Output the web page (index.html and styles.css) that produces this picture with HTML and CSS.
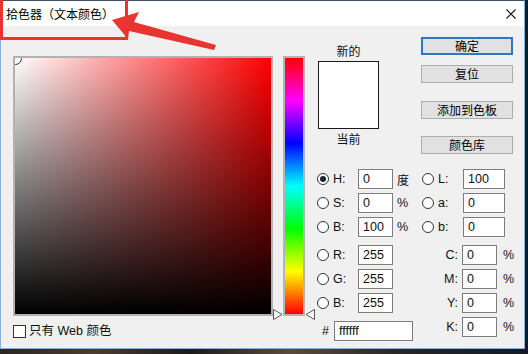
FILE: index.html
```html
<!DOCTYPE html>
<html>
<head>
<meta charset="utf-8">
<link rel="stylesheet" href="styles.css">
</head>
<body>
<div class="window">
  <div class="titlebar">
    <span class="title">拾色器（文本颜色）</span>
    <svg class="close" width="10" height="10" viewBox="0 0 10 10"><path d="M0.5 0.5L9.5 9.5M9.5 0.5L0.5 9.5" stroke="#111" stroke-width="1.1" fill="none"/></svg>
  </div>
  <div class="body">
    <div class="left">
      <div class="field"><span class="ring"></span></div>
      <div class="webonly"><span class="checkbox"></span><span class="cjk mixed">只有 Web 颜色</span></div>
    </div>
    <div class="hue-col">
      <div class="hue"></div>
      <svg class="tri tri-l" width="10" height="11" viewBox="0 0 10 11"><path d="M0.5 0.5L9 5.5L0.5 10.5Z" fill="#fff" stroke="#555" stroke-width="1"/></svg>
      <svg class="tri tri-r" width="10" height="11" viewBox="0 0 10 11"><path d="M9.5 0.5L1 5.5L9.5 10.5Z" fill="#fff" stroke="#555" stroke-width="1"/></svg>
    </div>
    <div class="panel">
      <div class="top">
        <div class="swatch-col">
          <div class="cap cap-new cjk">新的</div>
          <div class="swatch"></div>
          <div class="cap cap-cur cjk">当前</div>
        </div>
        <div class="buttons">
          <div class="btn btn-default cjk">确定</div>
          <div class="btn btn-reset cjk">复位</div>
          <div class="btn btn-add cjk">添加到色板</div>
          <div class="btn btn-lib cjk">颜色库</div>
        </div>
      </div>
      <div class="fields">
        <div class="col">
          <div class="row"><span class="radio on"></span><span class="lbl">H:</span><span class="inp">0</span><span class="unit cjk">度</span></div>
          <div class="row"><span class="radio"></span><span class="lbl">S:</span><span class="inp">0</span><span class="unit">%</span></div>
          <div class="row"><span class="radio"></span><span class="lbl">B:</span><span class="inp">100</span><span class="unit">%</span></div>
          <div class="row group"><span class="radio"></span><span class="lbl">R:</span><span class="inp">255</span></div>
          <div class="row"><span class="radio"></span><span class="lbl">G:</span><span class="inp">255</span></div>
          <div class="row"><span class="radio"></span><span class="lbl">B:</span><span class="inp">255</span></div>
          <div class="row hexrow"><span class="hash">#</span><span class="inp hex">ffffff</span></div>
        </div>
        <div class="col">
          <div class="row"><span class="radio"></span><span class="lbl">L:</span><span class="inp wide">100</span></div>
          <div class="row"><span class="radio"></span><span class="lbl">a:</span><span class="inp wide">0</span></div>
          <div class="row"><span class="radio"></span><span class="lbl">b:</span><span class="inp wide">0</span></div>
          <div class="row group"><span class="clbl">C:</span><span class="inp">0</span><span class="pct">%</span></div>
          <div class="row"><span class="clbl">M:</span><span class="inp">0</span><span class="pct">%</span></div>
          <div class="row"><span class="clbl">Y:</span><span class="inp">0</span><span class="pct">%</span></div>
          <div class="row"><span class="clbl">K:</span><span class="inp">0</span><span class="pct">%</span></div>
        </div>
      </div>
    </div>
  </div>
</div>
<svg class="annot" width="528" height="354" viewBox="0 0 528 354">
  <rect x="1.5" y="-3" width="125" height="41.5" fill="none" stroke="#e8352f" stroke-width="3"/>
  <path d="M112 20 L139 12 L134 22 L216 45 L214 50 L129 31 L128 39 Z" fill="#e8352f"/>
</svg>
</body>
</html>
```
FILE: styles.css
```css
* { box-sizing: border-box; }
html, body { margin: 0; padding: 0; }
body {
  width: 528px;
  height: 354px;
  overflow: hidden;
  position: relative;
  background: linear-gradient(90deg, #2b2522 0%, #4b3b31 18%, #1d1a1a 36%, #5a4a3f 55%, #2a2525 75%, #1a1e26 92%, #141a24 100%);
  font-family: "Liberation Sans", "Noto Sans CJK SC", sans-serif;
  font-size: 12.5px;
  color: #111;
}
.cjk { font-family: "Noto Sans CJK SC", "Liberation Sans", sans-serif; font-size: 12px; }
.cjk.mixed { font-family: "Liberation Sans", "Noto Sans CJK SC", sans-serif; font-size: 12.5px; }
.window {
  width: 525px;
  height: 349px;
  border: 1px solid #86b0dc;
  border-top-color: #3d4f66;
  background: #f0f0f0;
  display: flex;
  flex-direction: column;
}
.titlebar {
  height: 25px;
  flex: none;
  background: #fff;
  display: flex;
  align-items: center;
  padding-left: 5px;
}
.title { font-family: "Noto Sans CJK SC", sans-serif; font-size: 12px; color: #000; line-height: 14px; }
.close { margin-left: auto; margin-right: 8px; }
.body {
  flex: 1;
  display: flex;
  align-items: flex-start;
  padding: 11px 0 0 12px;
}
.left { width: 260px; margin-top: 19px; }
.field {
  width: 260px;
  height: 260px;
  border: 2px solid #b2b2b2;
  position: relative;
  overflow: hidden;
  background: linear-gradient(to bottom, rgba(0,0,0,0), #000), linear-gradient(to right, #fff, #f00);
}
.ring {
  position: absolute;
  left: -6px;
  top: -6px;
  width: 13px;
  height: 13px;
  border-radius: 50%;
  border: 1.5px solid #333;
}
.webonly { display: flex; align-items: center; margin-top: 9px; height: 13px; gap: 3px; }
.webonly .cjk { line-height: 13px; color: #111; }
.checkbox { width: 13px; height: 13px; border: 1px solid #333; background: #fff; flex: none; }
.hue-col { width: 41px; height: 260px; margin-top: 19px; position: relative; flex: none; }
.hue {
  margin-left: 10px;
  width: 22px;
  height: 260px;
  border: 2px solid #b4b4b4;
  background: linear-gradient(to bottom, #f00 0%, #f0f 16.67%, #00f 33.33%, #0ff 50%, #0f0 66.67%, #ff0 83.33%, #f00 100%);
}
.tri { position: absolute; top: 253px; }
.tri-l { left: 0; }
.tri-r { left: 32px; }
.panel { width: 210px; padding-left: 3px; flex: none; }
.top { display: flex; align-items: flex-start; }
.swatch-col { width: 61px; margin-left: 1px; display: flex; flex-direction: column; align-items: center; }
.cap { line-height: 14px; height: 14px; color: #111; }
.cap-new { margin-top: 7px; }
.cap-cur { margin-top: 3px; }
.swatch { width: 61px; height: 68px; border: 1px solid #1a1a1a; background: #fff; margin-top: 3px; }
.buttons { margin-left: 42px; width: 92px; display: flex; flex-direction: column; }
.btn {
  height: 18px;
  border: 1px solid #adadad;
  background: #e1e1e1;
  display: flex;
  align-items: center;
  justify-content: center;
  line-height: 14px;
  color: #000;
}
.btn-default { border: 2px solid #2f78bf; }
.btn-reset { margin-top: 10px; }
.btn-add { margin-top: 18px; }
.btn-lib { margin-top: 17px; }
.fields { display: grid; grid-template-columns: 105px 91px; margin-top: 15px; }
.col { display: flex; flex-direction: column; gap: 4px; }
.row { display: flex; align-items: center; height: 20px; }
.row.group { margin-top: 4px; }
.row.hexrow { margin-top: 4px; padding-left: 5px; }
.radio {
  width: 12px;
  height: 12px;
  border-radius: 50%;
  border: 1px solid #333;
  background: #fff;
  flex: none;
  margin-right: 4px;
  position: relative;
}
.radio.on::after {
  content: "";
  position: absolute;
  left: 2px;
  top: 2px;
  width: 6px;
  height: 6px;
  border-radius: 50%;
  background: #222;
}
.lbl { width: 25px; flex: none; }
.inp {
  width: 35px;
  height: 20px;
  flex: none;
  border: 1px solid #7c7c7c;
  background: #fff;
  padding-left: 4px;
  line-height: 18px;
  white-space: nowrap;
}
.inp.wide { width: 42px; }
.inp.hex { width: 79px; }
.unit { margin-left: 4px; }
.hash { width: 12px; flex: none; }
.clbl { width: 36px; text-align: right; margin-right: 4px; flex: none; }
.pct { margin-left: 6px; }
.annot { position: absolute; left: 0; top: 0; pointer-events: none; }
```
